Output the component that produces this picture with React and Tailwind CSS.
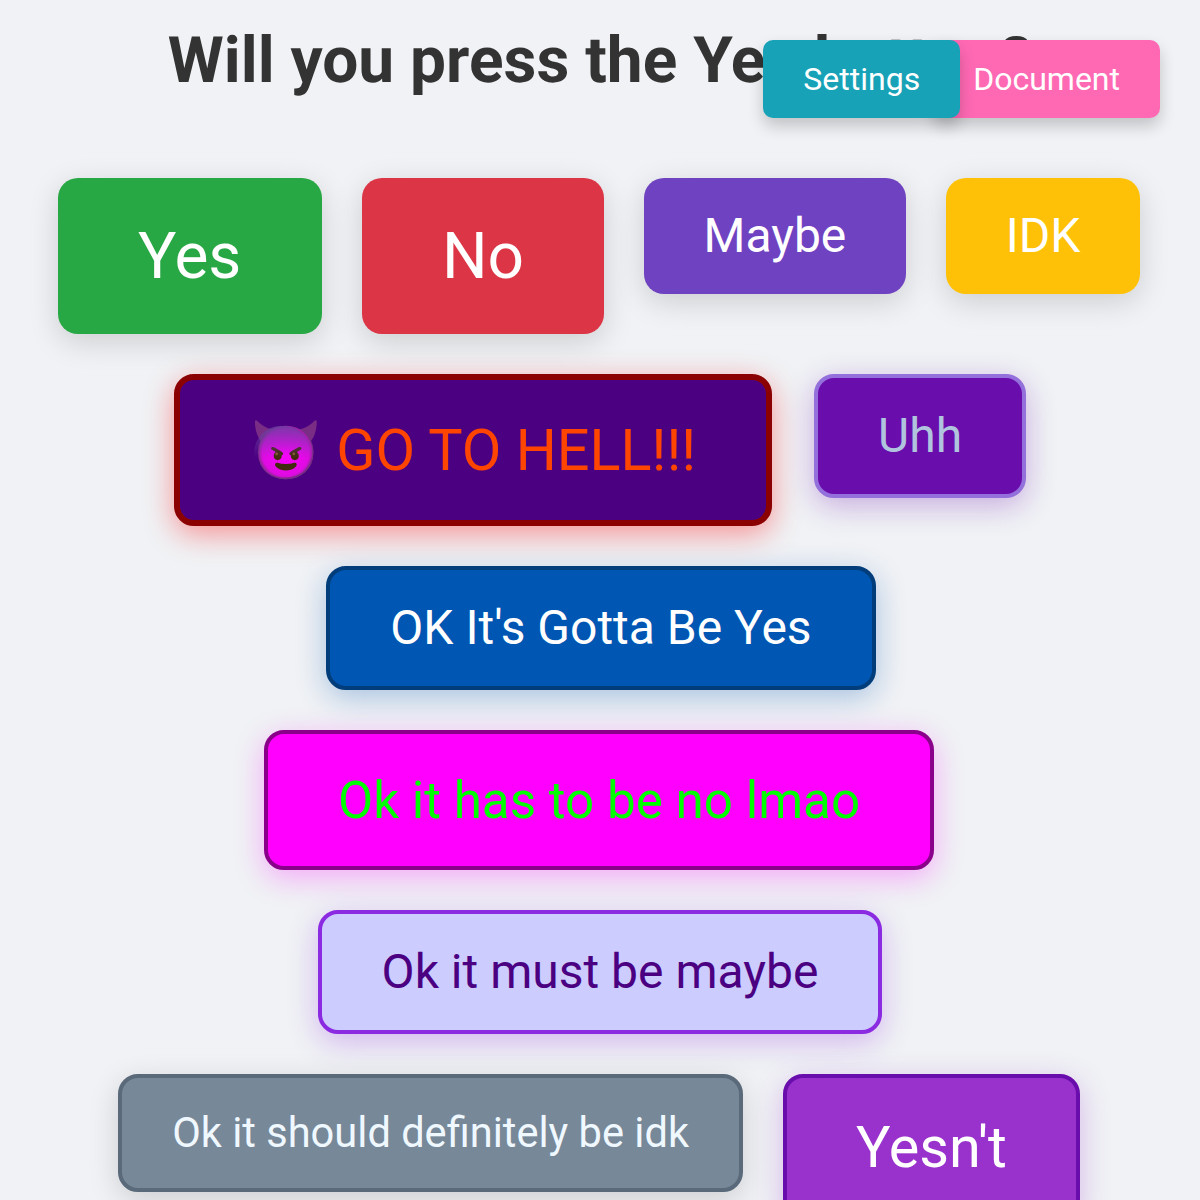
export default function App() {
  return (
    <div className="relative h-[1200px] overflow-hidden bg-[#f0f2f5] font-['Roboto',sans-serif] [text-rendering:geometricPrecision]">
      <h1 className="pt-[23px] pb-20 text-center text-[64px] font-bold leading-[75px] text-[#333333]">Will you press the Yes button?</h1>
      <div className="absolute right-10 top-10 flex">
        <button className="relative z-10 mr-[-27px] rounded-[10px] bg-[#17a2b8] px-10 py-5 text-[32px] leading-[38px] text-white shadow-[0_8px_16px_rgba(0,0,0,0.2)]">Settings</button>
        <button className="rounded-[10px] bg-[#ff69b4] px-10 py-5 text-[32px] leading-[38px] text-white shadow-[0_8px_16px_rgba(0,0,0,0.2)]">Document</button>
      </div>
      <div className="mr-[2px] flex flex-wrap items-start justify-center gap-10">
        <button className="rounded-[20px] bg-[#28a745] px-[80.5px] pt-[41px] pb-[39px] text-[64px] leading-[76px] text-white shadow-[0_8px_30px_rgba(0,0,0,0.15)]">Yes</button>
        <button className="rounded-[20px] bg-[#dc3545] px-20 pt-[41px] pb-[39px] text-[64px] leading-[76px] text-white shadow-[0_8px_30px_rgba(0,0,0,0.15)]">No</button>
        <button className="rounded-[20px] bg-[#6f42c1] px-[59.5px] py-[30px] text-[48px] leading-[56px] text-white shadow-[0_8px_30px_rgba(0,0,0,0.15)]">Maybe</button>
        <button className="rounded-[20px] bg-[#ffc107] px-[60px] py-[30px] text-[48px] leading-[56px] text-white shadow-[0_8px_30px_rgba(0,0,0,0.15)]">IDK</button>
        <button className="ml-[2px] rounded-[20px] border-[6px] border-[#8b0000] bg-[#4b0082] px-[70px] pt-[37px] pb-[35px] text-[57.6px] leading-[68px] text-[#ff4500] shadow-[0_8px_30px_rgba(255,0,0,0.4)]">
          <span className="relative">😈<span className="absolute left-[4px] top-[9px] h-[54px] w-[57px] rounded-full bg-[linear-gradient(180deg,rgba(107,63,160,0.85),rgba(107,63,160,0)_60%)]"></span></span> GO TO HELL!!!
        </button>
        <button className="ml-[2px] rounded-[20px] border-4 border-[#9370db] bg-[#6a0dad] px-[60px] py-[30px] text-[48px] leading-[56px] text-[#b0c4de] shadow-[0_8px_30px_rgba(106,13,173,0.3)]">Uhh</button>
        <button className="ml-1 rounded-[20px] border-4 border-[#003d7a] bg-[#0056b3] px-[60px] py-[30px] text-[48px] leading-[56px] text-white shadow-[0_8px_30px_rgba(0,86,179,0.3)]">OK It's Gotta Be Yes</button>
        <button className="rounded-[20px] border-4 border-[#8b008b] bg-[#ff00ff] px-[70px] pt-[37px] pb-[35px] text-[51.2px] leading-[60px] text-[#00ff00] shadow-[0_8px_30px_rgba(255,0,255,0.3)]">Ok it has to be no lmao</button>
        <button className="ml-[2px] rounded-[20px] border-4 border-[#8a2be2] bg-[#ccccff] px-[60px] py-[30px] text-[48px] leading-[56px] text-[#4b0082] shadow-[0_8px_30px_rgba(138,43,226,0.3)]">Ok it must be maybe</button>
        <button className="rounded-[20px] border-4 border-[#5a6a7a] bg-[#778899] px-[50px] py-[30px] text-[41.6px] leading-[50px] text-[#f0f8ff] shadow-[0_8px_30px_rgba(0,0,0,0.15)]">Ok it should definitely be idk</button>
        <button className="rounded-[20px] border-4 border-[#6a0dad] bg-[#9932cc] px-[69px] py-9 text-[57.6px] leading-[68px] text-white shadow-[0_8px_30px_rgba(153,50,204,0.3)]">Yesn't</button>
      </div>
    </div>
  );
}
